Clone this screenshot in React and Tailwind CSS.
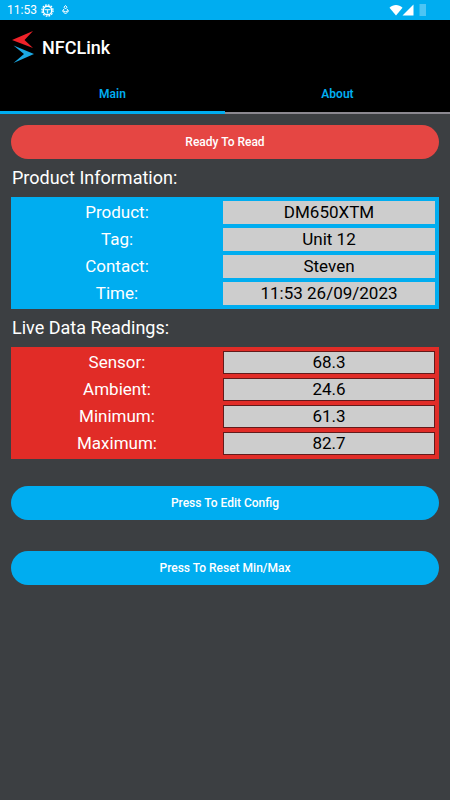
const product = [
  ['Product:', 'DM650XTM'],
  ['Tag:', 'Unit 12'],
  ['Contact:', 'Steven'],
  ['Time:', '11:53 26/09/2023'],
]

const readings = [
  ['Sensor:', '68.3'],
  ['Ambient:', '24.6'],
  ['Minimum:', '61.3'],
  ['Maximum:', '82.7'],
]

function StatusBar() {
  return (
    <div className="h-5 shrink-0 bg-[#00adf0] text-white flex items-center justify-between pl-[7px] pr-[22px]">
      <div className="flex items-center">
        <span className="text-xs">11:53</span>
        {/* settings badge */}
        <svg className="ml-1" width="13" height="13" viewBox="0 0 13 13" fill="none" stroke="currentColor">
          <circle cx="6.5" cy="6.5" r="4.3" strokeWidth="1.5" />
          <circle cx="6.5" cy="6.5" r="5.6" strokeWidth="1.3" strokeDasharray="1.7 1.2" />
          <path d="M3.5 5.7h6M6.500 5.500v4" strokeWidth="1.3" opacity=".8" />
        </svg>
        <svg className="ml-[7px]" width="9" height="12" viewBox="0 0 9 12" fill="none" stroke="currentColor">
          <path d="M4.500 1.500L6 3.200 4.500 5 3 3.200z" strokeWidth="1" />
          <path d="M3 5L1.500 7 4.500 10 7.500 7 6 5M2 6.800l2.500 1 2.500-1" strokeWidth="1" />
        </svg>
      </div>
      {/* wifi, signal, battery */}
      <svg width="39" height="12" viewBox="0 0 39 12" fill="currentColor">
        <path d="M.5 3.7C4.2.1 9.800.1 13.500 3.700L7 11.500z" />
        <path d="M24.500.5v11h-11z" />
        <path d="M30.500 0h6.500v12h-6.500z" opacity=".3" />
      </svg>
    </div>
  )
}

function Logo() {
  return (
    <svg width="22" height="34" viewBox="0 0 22 34" aria-hidden="true">
      <path d="M21 1L0 10 21 18 12.500 10z" fill="#ee2229" />
      <path d="M1.500 15.500L22 24 1.500 33 12 24z" fill="#1ba9e4" />
    </svg>
  )
}

function Tab({ active, children }) {
  return (
    <button
      type="button"
      role="tab"
      aria-selected={active}
      className={
        active
          ? 'flex-1 h-full pt-[3px] text-xs font-semibold text-[#00adf0] border-b-3 border-[#00adf0]'
          : 'flex-1 h-full pt-0.5 text-xs font-semibold text-[#00adf0] border-b-2 border-[#8b8890]'
      }
    >
      {children}
    </button>
  )
}

function Panel({ title, rows, panelClass, cellClass }) {
  return (
    <section>
      <h2 className="h-[38px] flex items-center pl-px text-lg text-white">{title}</h2>
      <div className={`pr-1 ${panelClass}`}>
        <table aria-label={title} className="w-full table-fixed border-separate border-spacing-x-0 border-spacing-y-1 text-[17px]/[23px]">
          <tbody>
            {rows.map(([label, value]) => (
              <tr key={label}>
                <th scope="row" className="h-[23px] p-0 font-normal text-center text-white">{label}</th>
                <td className={`h-[23px] p-0 text-center text-black ${cellClass}`}>{value}</td>
              </tr>
            ))}
          </tbody>
        </table>
      </div>
    </section>
  )
}

function PillButton({ className, children }) {
  return (
    <button type="button" className={`w-full h-[34px] rounded-full text-xs font-medium text-white ${className}`}>
      {children}
    </button>
  )
}

export default function App() {
  return (
    <div className="min-h-screen flex flex-col bg-[#3c3f42] font-[Roboto,sans-serif]">
      <StatusBar />

      <header className="bg-black">
        <div className="h-[54px] flex items-center gap-2 pl-3">
          <Logo />
          <h1 className="pt-0.5 text-lg font-medium text-white">NFCLink</h1>
        </div>
        <div role="tablist" className="h-10 flex bg-black">
          <Tab active>Main</Tab>
          <Tab active={false}>About</Tab>
        </div>
      </header>

      <main className="px-[11px] pt-[11px] pb-4">
        <PillButton className="bg-[#e54643]">Ready To Read</PillButton>
        <Panel title="Product Information:" rows={product} panelClass="bg-[#00adf0]" cellClass="bg-[#cdcdcd]" />
        <Panel
          title="Live Data Readings:"
          rows={readings}
          panelClass="bg-[#e12c27]"
          cellClass="bg-[#cdcdcd] outline -outline-offset-1 outline-[#631b1b]"
        />
        <div className="mt-[27px] flex flex-col gap-[31px]">
          <PillButton className="bg-[#00adf0]">Press To Edit Config</PillButton>
          <PillButton className="bg-[#00adf0]">Press To Reset Min/Max</PillButton>
        </div>
      </main>
    </div>
  )
}
